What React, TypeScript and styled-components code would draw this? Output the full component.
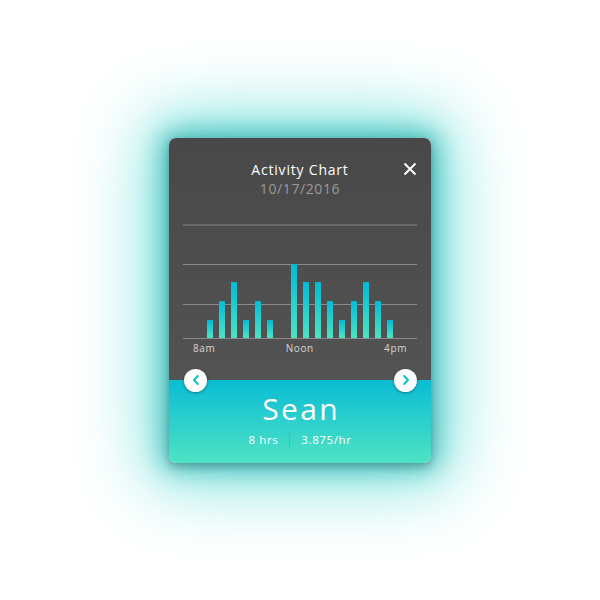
import React from 'react';
import styled, { createGlobalStyle } from 'styled-components';

const GlobalStyle = createGlobalStyle`
  html, body {
    margin: 0;
    padding: 0;
    background: #ffffff;
    font-family: "Open Sans", "Liberation Sans", sans-serif;
  }
`;

const Page = styled.div`
  width: 600px;
  height: 600px;
  display: flex;
  align-items: center;
  justify-content: center;
`;

const Card = styled.div`
  position: relative;
  width: 262px;
  height: 325px;
  border-radius: 7px;
  display: flex;
  flex-direction: column;
  box-shadow:
    0 3px 8px rgba(0, 0, 0, 0.25),
    0 0 24px 8px rgba(20, 165, 165, 0.6),
    0 0 70px 22px rgba(50, 215, 205, 0.6);
`;

const Top = styled.div`
  height: 242px;
  border-radius: 7px 7px 0 0;
  background: linear-gradient(180deg, #484848 0%, #535353 100%);
  display: flex;
  flex-direction: column;
  align-items: stretch;
  padding: 24px 14px 0;
  box-sizing: border-box;
  position: relative;
`;

const Header = styled.div`
  display: flex;
  flex-direction: column;
  align-items: center;
  height: 62px;
`;

const Title = styled.div`
  color: #ffffff;
  font-size: 14px;
  line-height: 16px;
  letter-spacing: 0.8px;
`;

const DateText = styled.div`
  color: #9a9a9a;
  font-size: 14px;
  line-height: 16px;
  margin-top: 3px;
  letter-spacing: 0.6px;
`;

const Close = styled.button`
  position: absolute;
  top: 24px;
  right: 14px;
  width: 14px;
  height: 14px;
  padding: 0;
  border: none;
  background: none;
  display: flex;
`;

const Labels = styled.div`
  display: flex;
  justify-content: space-between;
  padding: 0 10px;
  margin-top: 1px;
  color: #d6d6d6;
  font-size: 10px;
  letter-spacing: 0.6px;
`;

const Bottom = styled.div`
  flex: 1;
  border-radius: 0 0 7px 7px;
  background: linear-gradient(180deg, #0abcd4 0%, #4fe3c4 100%);
  display: flex;
  flex-direction: column;
  align-items: center;
  padding-top: 11px;
  box-sizing: border-box;
`;

const Name = styled.div`
  color: #ffffff;
  font-size: 30px;
  font-weight: 400;
  line-height: 36px;
  letter-spacing: 2.4px;
  padding-left: 2.4px;
`;

const Stats = styled.div`
  display: flex;
  align-items: center;
  gap: 11px;
  margin-top: 5px;
  color: #ffffff;
  font-size: 11.5px;
  letter-spacing: 0.6px;
`;

const Divider = styled.span`
  width: 1px;
  height: 15px;
  background: #8d9d9c;
`;

const Arrow = styled.button<{ side: 'left' | 'right' }>`
  position: absolute;
  top: 231px;
  ${(p) => (p.side === 'left' ? 'left: 15px;' : 'right: 14px;')}
  width: 23px;
  height: 23px;
  border-radius: 50%;
  border: none;
  padding: 0;
  background: #ffffff;
  box-shadow: 0 1px 3px rgba(0, 0, 0, 0.35);
  display: flex;
  align-items: center;
  justify-content: center;
`;

const data = [0, 0, 1, 2, 3, 1, 2, 1, 0, 4, 3, 3, 2, 1, 2, 3, 2, 1];
const heights = [0, 18, 37, 56, 74];

const Chart = () => (
  <svg width="234" height="116" style={{ display: 'block' }}>
    <defs>
      <linearGradient id="bar" x1="0" y1="0" x2="0" y2="1">
        <stop offset="0" stopColor="#00bcd8" />
        <stop offset="1" stopColor="#4fe3c2" />
      </linearGradient>
    </defs>
    {[1, 40.5, 80.5, 114.5].map((y) => (
      <line key={y} x1="0" x2="234" y1={y} y2={y} stroke="#8a8a8a" strokeWidth="1" />
    ))}
    {data.map((v, i) =>
      v ? (
        <rect
          key={i}
          x={i * 12}
          y={114 - heights[v]}
          width="6"
          height={heights[v]}
          fill="url(#bar)"
        />
      ) : null
    )}
  </svg>
);

const Chevron = ({ dir }: { dir: 'left' | 'right' }) => (
  <svg width="14" height="14" viewBox="0 0 14 14">
    <path
      d={dir === 'left' ? 'M8.8 3 L5 7 L8.8 11' : 'M5.2 3 L9 7 L5.2 11'}
      fill="none"
      stroke="#12bccb"
      strokeWidth="2"
      strokeLinecap="round"
      strokeLinejoin="round"
    />
  </svg>
);

const App = () => {
  return (
    <Page>
      <GlobalStyle />
      <Card>
        <Top>
          <Header>
            <Title>Activity Chart</Title>
            <DateText>10/17/2016</DateText>
          </Header>
          <Close aria-label="close">
            <svg width="14" height="14" viewBox="0 0 14 14">
              <path d="M1.5 1.5 L12.5 12.5 M12.5 1.5 L1.5 12.5" stroke="#ffffff" strokeWidth="2" />
            </svg>
          </Close>
          <Chart />
          <Labels>
            <span>8am</span>
            <span>Noon</span>
            <span>4pm</span>
          </Labels>
        </Top>
        <Bottom>
          <Name>Sean</Name>
          <Stats>
            <span>8 hrs</span>
            <Divider />
            <span>3.875/hr</span>
          </Stats>
        </Bottom>
        <Arrow side="left">
          <Chevron dir="left" />
        </Arrow>
        <Arrow side="right">
          <Chevron dir="right" />
        </Arrow>
      </Card>
    </Page>
  );
};

export default App;
